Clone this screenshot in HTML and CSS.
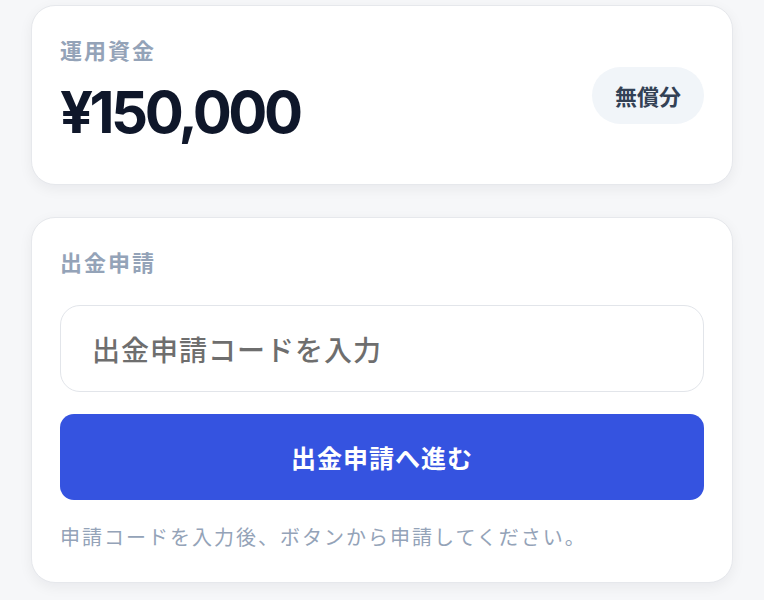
FILE: index.html
```html
<!DOCTYPE html>
<html lang="ja">
<head>
<meta charset="utf-8">
<title>出金申請</title>
<link rel="stylesheet" href="styles.css">
</head>
<body>
<main class="page">
  <section class="card balance">
    <div class="balance-info">
      <div class="label">運用資金</div>
      <div class="amount">¥150,000</div>
    </div>
    <span class="badge">無償分</span>
  </section>
  <section class="card withdraw">
    <div class="label">出金申請</div>
    <input class="code-input" type="text" placeholder="出金申請コードを入力">
    <button class="submit" type="button">出金申請へ進む</button>
    <p class="hint">申請コードを入力後、ボタンから申請してください。</p>
  </section>
</main>
</body>
</html>
```
FILE: styles.css
```css
* { box-sizing: border-box; }
html, body { margin: 0; padding: 0; }
body {
  background: #f6f7f9;
  font-family: "Noto Sans CJK JP", "Noto Sans", sans-serif;
}
.page {
  display: flex;
  flex-direction: column;
  gap: 32px;
  padding: 5px 31px 20px;
}
.card {
  background: #ffffff;
  border: 1px solid #e6e8ec;
  border-radius: 24px;
  padding: 28px;
  box-shadow: 0 4px 14px rgba(15, 23, 42, 0.06);
}
.balance {
  display: flex;
  align-items: center;
  justify-content: space-between;
  height: 180px;
}
.balance-info {
  display: flex;
  flex-direction: column;
  padding-bottom: 9px;
}
.label {
  font-size: 22px;
  line-height: 31px;
  font-weight: 700;
  color: #94a3b8;
  letter-spacing: 2px;
}
.amount {
  margin-top: 12px;
  font-family: Inter, "Liberation Sans", sans-serif;
  font-weight: 700;
  font-size: 58px;
  line-height: 70px;
  letter-spacing: -3.5px;
  color: #0f172a;
}
.badge {
  display: inline-flex;
  align-items: center;
  justify-content: center;
  height: 57px;
  padding: 0 23px;
  border-radius: 29px;
  background: #f1f5f9;
  color: #334155;
  font-size: 22px;
  font-weight: 700;
}
.withdraw {
  display: flex;
  flex-direction: column;
  height: 366px;
}
.code-input {
  margin-top: 28px;
  height: 87px;
  width: 100%;
  border: 1px solid #e2e5ea;
  border-radius: 20px;
  padding: 0 31px;
  font-family: "Noto Sans CJK JP", sans-serif;
  font-size: 28px;
  font-weight: 500;
  letter-spacing: 1px;
  color: #111827;
  background: #ffffff;
  outline: none;
}
.code-input::placeholder {
  color: #6e6e6e;
}
.submit {
  margin-top: 22px;
  height: 86px;
  width: 100%;
  border: none;
  border-radius: 14px;
  background: #3553e0;
  color: #ffffff;
  font-family: "Noto Sans CJK JP", sans-serif;
  font-size: 25px;
  font-weight: 700;
  letter-spacing: 1px;
}
.hint {
  margin: 20px 0 0;
  font-size: 20px;
  line-height: 33px;
  letter-spacing: 2px;
  color: #94a3b8;
}
```
